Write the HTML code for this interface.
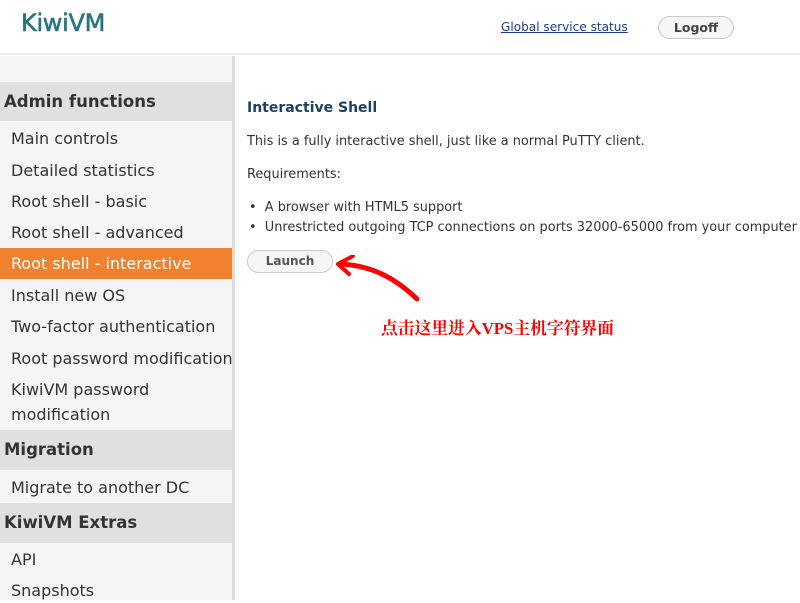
<!DOCTYPE html>
<html><head><meta charset="utf-8"><style>
*{margin:0;padding:0;box-sizing:border-box}
body{width:800px;height:600px;overflow:hidden;background:#fff;font-family:"DejaVu Sans",Verdana,sans-serif;position:relative}
.hdr{position:absolute;left:0;top:0;width:800px;height:55px;border-bottom:2px solid #ececec}
.logo{position:absolute;left:21px;top:9px;font-size:24px;color:#2a7585;font-family:"DejaVu Sans",sans-serif;-webkit-text-stroke:0.6px #2a7585;letter-spacing:-0.3px}
.gs{position:absolute;left:501px;top:20px;font-size:12.1px;color:#1a3d8f;text-decoration:underline}
.lo{position:absolute;left:658px;top:16px;width:76px;height:23px;border:1px solid #ccc;border-radius:12px;background:#f6f6f6;font-size:12.5px;font-weight:bold;color:#444;text-align:center;line-height:21px}
.side{position:absolute;left:0;top:56px;width:235px;height:544px;background:#f5f5f5;border-right:3px solid #ddd}
.it{position:absolute;left:0;width:232px;font-size:16px;color:#333;padding-left:11px;line-height:25px}
.h{position:absolute;left:0;width:232px;background:#e0e0e0;font-size:16.5px;font-weight:bold;color:#333;padding-left:4px}
.act{background:#f0812f;color:#fff}
.main{position:absolute;left:247px;font-size:12.9px;color:#333}
</style></head><body>
<div class="hdr"><div class="logo">KiwiVM</div><div class="gs">Global service status</div><div class="lo">Logoff</div></div>
<div class="side"></div>
<div class="h" style="top:82px;height:39px;line-height:39px">Admin functions</div>
<div class="it" style="top:126px">Main controls</div>
<div class="it" style="top:158px">Detailed statistics</div>
<div class="it" style="top:189px">Root shell - basic</div>
<div class="it" style="top:220px">Root shell - advanced</div>
<div class="it act" style="top:248px;height:31px;line-height:31px">Root shell - interactive</div>
<div class="it" style="top:283px">Install new OS</div>
<div class="it" style="top:314px">Two-factor authentication</div>
<div class="it" style="top:346px;white-space:nowrap">Root password modification</div>
<div class="it" style="top:377px">KiwiVM password<br>modification</div>
<div class="h" style="top:430px;height:40px;line-height:40px">Migration</div>
<div class="it" style="top:475px">Migrate to another DC</div>
<div class="h" style="top:503px;height:40px;line-height:40px">KiwiVM Extras</div>
<div class="it" style="top:547px">API</div>
<div class="it" style="top:578px">Snapshots</div>
<div class="main" style="top:100px;font-weight:bold;font-size:14px;color:#1f4060">Interactive Shell</div>
<div class="main" style="top:134px">This is a fully interactive shell, just like a normal PuTTY client.</div>
<div class="main" style="top:167px">Requirements:</div>
<div class="main" style="top:200px;left:249px;white-space:nowrap">•&nbsp; A browser with HTML5 support</div>
<div class="main" style="top:220px;left:249px;white-space:nowrap">•&nbsp; Unrestricted outgoing TCP connections on ports 32000-65000 from your computer</div>
<div class="main" style="top:250px;width:86px;height:23px;border:1px solid #ccc;border-radius:12px;background:#f6f6f6;font-weight:bold;color:#555;text-align:center;line-height:21px;font-size:12px">Launch</div>
<svg style="position:absolute;left:335px;top:255px" width="90" height="50"><path d="M4 9 C30 10 55 18 82 44" stroke="#f00" stroke-width="5" fill="none" stroke-linecap="round"/><path d="M3 9 L18 1 M3 9 L14 19" stroke="#f00" stroke-width="4" stroke-linecap="round"/></svg>
<div style="position:absolute;left:381px;top:315px;font-size:16.8px;font-weight:bold;color:#f00;font-family:'Liberation Serif','Noto Serif CJK SC',serif">点击这里进入VPS主机字符界面</div>
</body></html>
